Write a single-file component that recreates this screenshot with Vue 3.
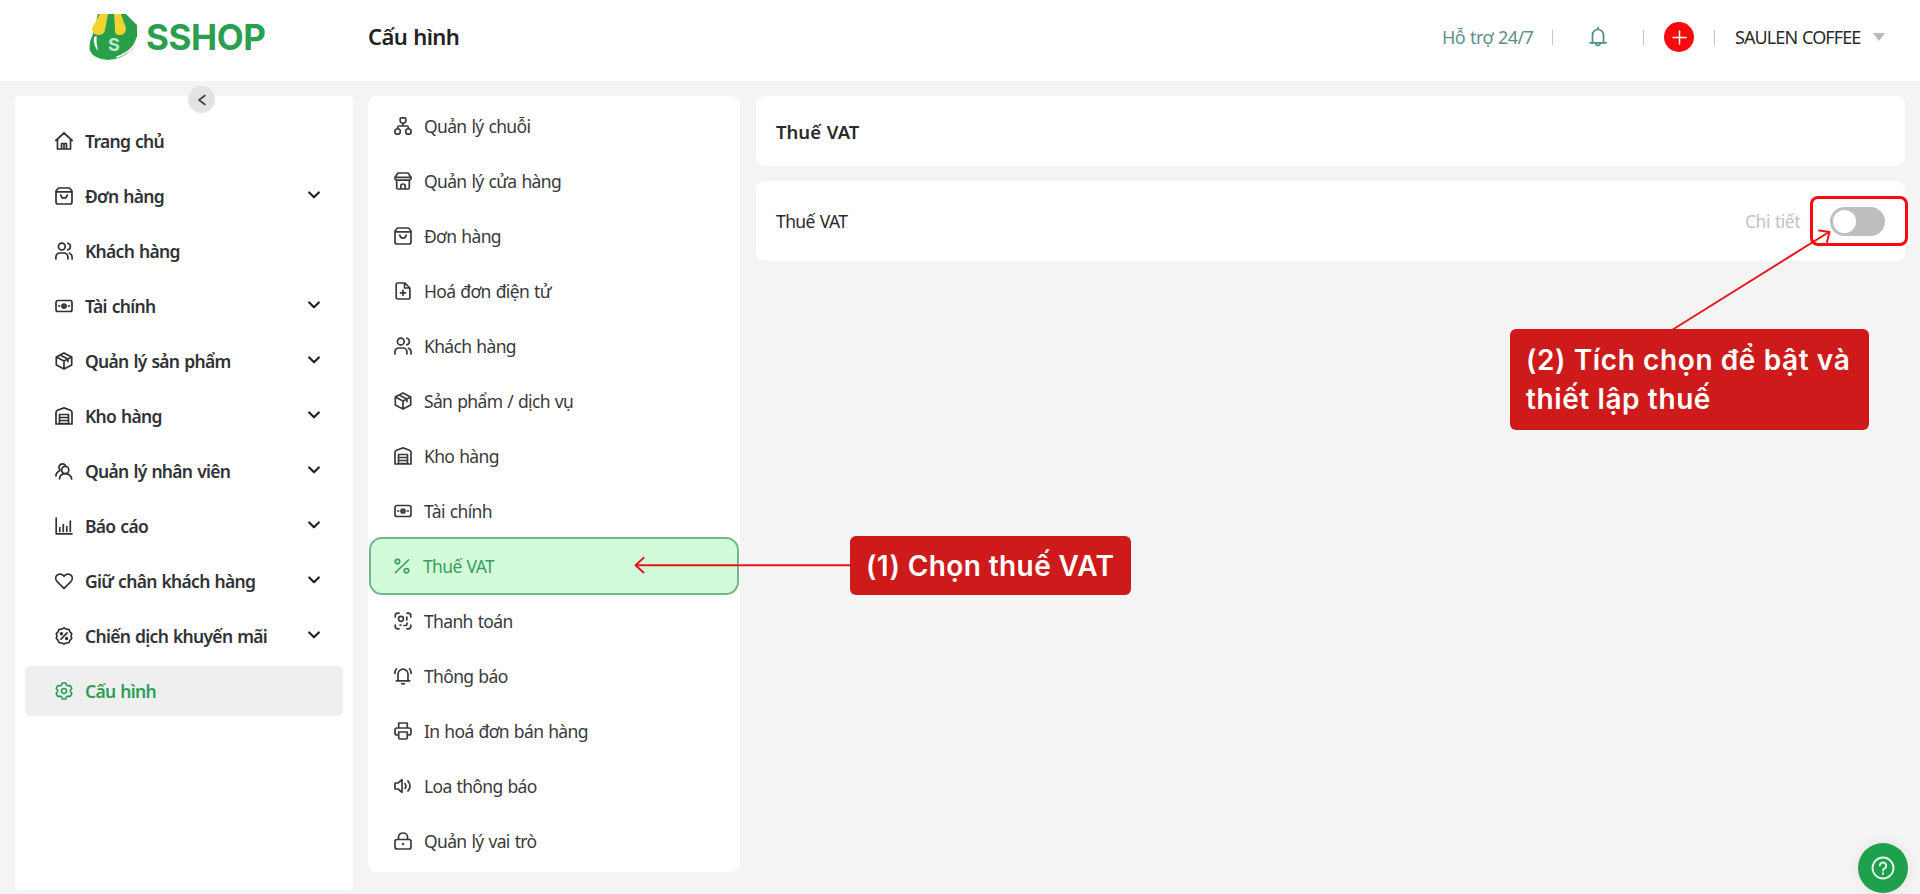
<template>
  <div class="page">
    <header class="topbar">
      <div class="brand">
        <svg class="brand-mark" viewBox="0 0 50 48">
          <path d="M10 1H38L49 12V22Q50 30 43 37Q35 46 20 47Q6 46 2 38Q0 31 5 21Z" fill="#2a9f4a" />
          <path d="M12 1H20L17 17Q16 22 10 22Q4 21 4 15Z" fill="#f3d32f" />
          <path d="M26 1H33L38 15Q38 22 32 22Q26 22 27 16Z" fill="#f3d32f" />
          <path d="M6 24Q5 32 10 38Q8 30 8.500 23Z" fill="#fff" />
          <path d="M49 25Q46 38 29 44" fill="none" stroke="#fff" stroke-width="1.500" />
          <text x="20" y="38" class="brand-s">S</text>
        </svg>
        <span class="brand-name">SSHOP</span>
      </div>
      <h1 class="page-title">Cấu hình</h1>
      <div class="topbar-right">
        <span class="support">Hỗ trợ 24/7</span>
        <span class="sep"></span>
        <svg class="bell" viewBox="0 0 18 20">
          <path d="M3.500 15.500V8a5.500 5.500 0 0 1 11 0v7.500M1 15.800h16M9 2.500V.8M7 17.500q2 2.200 4 0" />
        </svg>
        <span class="sep"></span>
        <button class="add-btn">
          <svg viewBox="0 0 16 16"><path d="M8 1v14M1 8h14" /></svg>
        </button>
        <span class="sep"></span>
        <span class="account">SAULEN COFFEE</span>
        <span class="caret"></span>
      </div>
    </header>

    <div class="content">
      <nav class="sidebar">
        <button class="collapse-btn">
          <svg viewBox="0 0 10 12"><path d="M8 1.500L2 6l6 4.500" /></svg>
        </button>
        <div v-for="item in mainMenu" :key="item.label" class="side-item" :class="{ active: item.active }">
          <svg class="icon" viewBox="0 0 18 18"><path :d="icons[item.icon]" /></svg>
          <span class="side-label">{{ item.label }}</span>
          <svg v-if="item.children" class="chevron" viewBox="0 0 12 8"><path d="M1.200 1.500L6 6.300l4.800-4.800" /></svg>
        </div>
      </nav>

      <nav class="settings">
        <div v-for="item in settingsMenu" :key="item.label" class="set-item" :class="{ active: item.active }">
          <svg class="icon" viewBox="0 0 18 18"><path :d="icons[item.icon]" /></svg>
          <span class="set-label">{{ item.label }}</span>
        </div>
      </nav>

      <main class="main">
        <section class="card card-title">Thuế VAT</section>
        <section class="card card-row">
          <span class="row-name">Thuế VAT</span>
          <span class="row-detail">Chi tiết</span>
          <span class="switch" :class="{ on: vatEnabled }" @click="vatEnabled = !vatEnabled"><i></i></span>
        </section>
      </main>
    </div>

    <!-- guide notes over the page -->
    <svg class="arrows" viewBox="0 0 1920 894">
      <path d="M852 565.200H636M643.500 558L635.500 565.200L643.500 572.400" />
      <path d="M1672 330L1829 232M1819 230.500L1829.500 232L1827 242" />
    </svg>
    <div class="target"></div>
    <div class="note note-one">(1) Chọn thuế VAT</div>
    <div class="note note-two">(2) Tích chọn để bật và<br />thiết lập thuế</div>

    <button class="help-btn">
      <svg viewBox="0 0 24 24">
        <circle cx="12" cy="12" r="10.500" />
        <path d="M8.800 9.600a3.200 3.200 0 1 1 4.800 2.800q-1.600.9-1.600 2.300M12 17.200v.9" />
      </svg>
    </button>
  </div>
</template>

<script setup>
import { ref } from 'vue';

const vatEnabled = ref(false);

const icons = {
  home: 'M.8 8.500L9 1l8.200 7.500M2.500 7.500V17h13V7.500M6.500 17v-5.500h5V17M9 12v4',
  bag: 'M3.500 1h11L17 4v11a2 2 0 0 1-2 2H3a2 2 0 0 1-2-2V4zM1 4.800h16M5.800 8q.4 3.200 3.200 3.200T12.200 8',
  users: 'M10.200 4.500a3.400 3.400 0 1 1-6.800 0a3.400 3.400 0 0 1 6.800 0M.9 17v-2a4 4 0 0 1 4-4h4a4 4 0 0 1 4 4v2M12.800 1.200a3.400 3.400 0 0 1 0 6.600M14.500 11.200q2.600 1 2.600 4V17',
  money: 'M3 3.500h12a2 2 0 0 1 2 2v7a2 2 0 0 1-2 2H3a2 2 0 0 1-2-2v-7a2 2 0 0 1 2-2M11 9a2 2 0 1 1-4 0a2 2 0 0 1 4 0M9 8.500v1M3.700 9h1M13.300 9h1',
  box: 'M9 .9l7.700 4v8.200L9 17.100l-7.700-4V4.900zM1.300 4.900L9 9l7.700-4.100M9 9v8M5 2.900l7.900 4.200v2.500',
  store: 'M1 17V5.500Q1 4 2.500 3.200L9 .9l6.500 2.300Q17 4 17 5.500V17zM4.500 17V7.500h9V17M4.500 10.500h9M4.500 13.500h9M4.500 16.500h9',
  staff: 'M13.800 8a3.600 3.600 0 1 1-7.200 0a3.600 3.600 0 0 1 7.200 0M4.500 17q.2-5 5.700-5.400q5.500.4 6.500 5.400M4.800 7.800a3.400 3.400 0 1 1 5.500-4.600M.9 14q.2-3.600 4-5.400',
  chart: 'M1.200 1v15.800H17M4.800 14.500v-4M8.300 14.500v-7M11.800 14.500v-5M15.300 14.500V4',
  heart: 'M9 16.300L2.200 9.600a4.500 4.500 0 0 1-.4-6.200a4.500 4.500 0 0 1 6.600.2L9 4.300l.6-.7a4.500 4.500 0 0 1 6.600-.2a4.500 4.500 0 0 1-.4 6.200z',
  promo: 'M9 .9l2.300 1.200 2.600.2.900 2.400 1.900 1.900-.6 2.400.6 2.500-1.900 1.900-.9 2.300-2.600.3L9 17.100l-2.300-1.100-2.600-.3-.9-2.300-1.900-1.900.6-2.500-.6-2.400 1.900-1.900.9-2.400 2.600-.2zM12 5.800L6 12.200M7.300 6.700a.9.900 0 1 1-1.800 0a.9.900 0 0 1 1.800 0M12.500 11.500a.9.900 0 1 1-1.800 0a.9.900 0 0 1 1.800 0',
  gear: 'M7.300 1h3.400l.8 2.100 1.300.8 2.300-.4 1.700 2.900L15.400 8.200v1.600l1.400 1.800-1.700 2.900-2.300-.4-1.300.8-.8 2.100H7.300l-.8-2.100-1.300-.8-2.300.4-1.700-2.900L2.600 9.800V8.200L1.200 6.400l1.700-2.900 2.300.4 1.300-.8zM11.500 9a2.500 2.500 0 1 1-5 0a2.500 2.500 0 0 1 5 0',
  chain: 'M7 .9h4a.8.800 0 0 1 .8.800v2.800L10.500 6h-3L6.200 4.500V1.700A.8.800 0 0 1 7 .9M9 6v3M3.700 12V10.500q0-1.500 1.500-1.500h7.600q1.500 0 1.500 1.500V12M2.200 12h3l1 1.200v2.600l-1 1.300h-3l-1.200-1.300v-2.600zM12.800 12h3l1.200 1.200v2.600l-1.200 1.300h-3l-1-1.300v-2.600z',
  shop: 'M4 1h10l3 4.300v1q0 1.900-2 1.900H3q-2 0-2-1.900v-1zM1.200 5.300h15.600M2.700 8.200V15.500q0 1.500 1.500 1.500h9.600q1.500 0 1.500-1.500V8.200M6.800 17v-2.700q0-2.300 2.200-2.300t2.200 2.300V17',
  invoice: 'M3.700 1h7.200l5 5v9.500a1.500 1.500 0 0 1-1.500 1.500H3.700a1.500 1.500 0 0 1-1.500-1.500v-13A1.500 1.500 0 0 1 3.700 1M10.500 1.200V6h5M9 8.300v5M6.500 10.800h5',
  percent: 'M15.500 3L2.500 15.500M6.700 4.500a2.200 2.200 0 1 1-4.400 0a2.200 2.200 0 0 1 4.400 0M15.700 13.700a2.200 2.200 0 1 1-4.400 0a2.200 2.200 0 0 1 4.400 0',
  scan: 'M1.200 5V3.700q0-2.500 2.500-2.500H5M13 1.200h1.300q2.500 0 2.500 2.500V5M1.200 13v1.300q0 2.500 2.500 2.500H5M13 16.800h1.300q2.500 0 2.500-2.500V13M9.500 6.800a2.500 2.500 0 1 1-5 0a2.500 2.500 0 0 1 5 0M12.800 5v3M13 11v1q0 1.500-1.500 1.500H10M6 13h1',
  alarm: 'M4 13.500V7.200a5 5 0 0 1 10 0v6.300M2.300 13.800h13.400M7.700 16.500q1.300 1.200 2.600 0M.9 6.500Q1 3.500 2.500 1.800M17.100 6.500Q17 3.500 15.500 1.800',
  printer: 'M4.700 6V1h8.600v5M4.500 13H3q-2 0-2-2V8q0-2 2-2h12q2 0 2 2v3q0 2-2 2h-1.500M4.700 10h8.600v5.500q0 1.500-1.500 1.500H6.200q-1.500 0-1.500-1.500z',
  speaker: 'M1 6h3l4-3.300v12.600L4 12H1zM11 6.700q1.800 2.300 0 4.600M14 4q4 5 0 10',
  lock: 'M3 7.500h12q2 0 2 2V15q0 2-2 2H3q-2 0-2-2V9.500q0-2 2-2M4.500 7.500V5a4.500 4 0 0 1 9 0v2.500M8.600 12h.8M9 11.600v.8'
};

const mainMenu = [
  { label: 'Trang chủ', icon: 'home' },
  { label: 'Đơn hàng', icon: 'bag', children: true },
  { label: 'Khách hàng', icon: 'users' },
  { label: 'Tài chính', icon: 'money', children: true },
  { label: 'Quản lý sản phẩm', icon: 'box', children: true },
  { label: 'Kho hàng', icon: 'store', children: true },
  { label: 'Quản lý nhân viên', icon: 'staff', children: true },
  { label: 'Báo cáo', icon: 'chart', children: true },
  { label: 'Giữ chân khách hàng', icon: 'heart', children: true },
  { label: 'Chiến dịch khuyến mãi', icon: 'promo', children: true },
  { label: 'Cấu hình', icon: 'gear', active: true }
];

const settingsMenu = [
  { label: 'Quản lý chuỗi', icon: 'chain' },
  { label: 'Quản lý cửa hàng', icon: 'shop' },
  { label: 'Đơn hàng', icon: 'bag' },
  { label: 'Hoá đơn điện tử', icon: 'invoice' },
  { label: 'Khách hàng', icon: 'users' },
  { label: 'Sản phẩm / dịch vụ', icon: 'box' },
  { label: 'Kho hàng', icon: 'store' },
  { label: 'Tài chính', icon: 'money' },
  { label: 'Thuế VAT', icon: 'percent', active: true },
  { label: 'Thanh toán', icon: 'scan' },
  { label: 'Thông báo', icon: 'alarm' },
  { label: 'In hoá đơn bán hàng', icon: 'printer' },
  { label: 'Loa thông báo', icon: 'speaker' },
  { label: 'Quản lý vai trò', icon: 'lock' }
];
</script>

<style>
body {
  margin: 0;
  background: #f4f4f4;
}
</style>

<style scoped>
.page {
  position: relative;
  width: 1920px;
  height: 894px;
  overflow: hidden;
  background: #f4f4f4;
  font-family: "Noto Sans", "Open Sans", sans-serif;
  font-size: 17.5px;
  letter-spacing: -0.7px;
  word-spacing: 1px;
  color: #2b2b2b;
  box-sizing: border-box;
}

.page * {
  box-sizing: border-box;
}

button {
  border: 0;
  padding: 0;
  display: flex;
  align-items: center;
  justify-content: center;
  border-radius: 50%;
}

svg {
  flex: none;
}

path,
circle {
  stroke-linecap: round;
  stroke-linejoin: round;
}

.topbar {
  height: 81px;
  background: #fff;
  display: flex;
  align-items: center;
  padding: 0 35px 7px 88px;
}

.brand {
  display: flex;
  align-items: center;
  width: 280px;
  gap: 8px;
}

.brand-mark {
  width: 50px;
  height: 48px;
}

.brand-s {
  font: 700 18px Inter, sans-serif;
  fill: #bfe8cd;
}

.brand-name {
  font-family: Inter, sans-serif;
  font-size: 35px;
  font-weight: 700;
  letter-spacing: -0.4px;
  line-height: 46px;
  color: #2a9f4f;
}

.page-title {
  margin: 0;
  padding-bottom: 2px;
  font-size: 22px;
  font-weight: 600;
  letter-spacing: -0.6px;
  color: #222;
}

.topbar-right {
  margin-left: auto;
  display: flex;
  align-items: center;
}

.support {
  width: 110px;
  font-size: 18px;
  letter-spacing: -0.6px;
  color: #5b918b;
}

.sep {
  width: 1px;
  height: 15px;
  background: #c4c4c4;
}

.bell {
  width: 18px;
  height: 20px;
  margin: 0 36px;
}

.bell path {
  fill: none;
  stroke: #4d8d87;
  stroke-width: 1.7;
}

.add-btn {
  width: 30px;
  height: 30px;
  margin: 0 20px;
  background: #f9090d;
}

.add-btn svg {
  width: 15px;
  height: 15px;
}

.add-btn path {
  stroke: #fff;
  stroke-width: 1.6;
}

.account {
  margin-left: 20px;
  width: 138px;
  font-size: 18px;
  letter-spacing: -0.9px;
  white-space: nowrap;
}

.caret {
  border: 6px solid transparent;
  border-top: 8px solid #b9bcbc;
  border-bottom: 0;
}

.content {
  display: flex;
  align-items: flex-start;
  padding: 15px 15px 0 15px;
}

.sidebar {
  position: relative;
  width: 338px;
  height: 794px;
  margin-right: 15px;
  padding: 20px 10px 0;
  background: #fff;
  border-radius: 4px;
  display: flex;
  flex-direction: column;
  gap: 5px;
}

.collapse-btn {
  position: absolute;
  left: 173px;
  top: -10px;
  width: 27px;
  height: 27px;
  background: #e2e3e2;
}

.collapse-btn svg {
  width: 10px;
  height: 12px;
}

.collapse-btn path {
  fill: none;
  stroke: #3d4349;
  stroke-width: 1.6;
}

.side-item {
  height: 50px;
  padding: 0 23px 0 30px;
  display: flex;
  align-items: center;
  border-radius: 5px;
  font-weight: 560;
  color: #303236;
}

.side-item.active {
  background: #eeefee;
  color: #2a9f55;
}

.icon {
  width: 18px;
  height: 18px;
  margin-right: 12px;
}

.icon path {
  fill: none;
  stroke: currentColor;
  stroke-width: 1.7;
}

.side-label {
  flex: 1;
  white-space: nowrap;
}

.chevron {
  width: 12px;
  height: 8px;
  margin-top: -2px;
}

.chevron path {
  fill: none;
  stroke: #222;
  stroke-width: 2.2;
}

.settings {
  width: 372px;
  height: 776px;
  margin-right: 16px;
  padding: 2px 1px 0;
  background: #fff;
  border-radius: 9px;
}

.set-item {
  height: 55px;
  padding-left: 25px;
  display: flex;
  align-items: center;
  color: #3a3a3a;
}

.set-label {
  letter-spacing: -0.65px;
}

.set-item.active {
  height: 58px;
  margin: -1px 0 -2px;
  padding-left: 22px;
  border: 2px solid #73b78e;
  border-radius: 13px;
  background: #d2fbd9;
  color: #3a9d5c;
}

.main {
  flex: 1;
  display: flex;
  flex-direction: column;
  gap: 15px;
}

.card {
  background: #fff;
  border-radius: 9px;
  padding: 0 20px;
  display: flex;
  align-items: center;
}

.card-title {
  height: 70px;
  padding-top: 1px;
  font-size: 18.5px;
  font-weight: 600;
  letter-spacing: 0;
}

.card-row {
  height: 80px;
}

.row-name {
  letter-spacing: -0.6px;
}

.row-detail {
  margin-left: auto;
  margin-right: 30px;
  letter-spacing: -0.5px;
  color: #c3c3c3;
}

.switch {
  width: 55px;
  height: 29px;
  padding: 3px;
  border-radius: 15px;
  background: #bcbfbc;
}

.switch i {
  display: block;
  width: 23px;
  height: 23px;
  border-radius: 50%;
  background: #fff;
}

.switch.on {
  padding-left: 29px;
  background: #2a9f55;
}

.arrows {
  position: absolute;
  left: 0;
  top: 0;
  width: 1920px;
  height: 894px;
  pointer-events: none;
}

.arrows path {
  fill: none;
  stroke: #e8141a;
  stroke-width: 2;
}

.target {
  position: absolute;
  left: 1810px;
  top: 196px;
  width: 98px;
  height: 50px;
  border: 3px solid #f40c10;
  border-radius: 8px;
  pointer-events: none;
}

.note {
  position: absolute;
  background: #ce1a1a;
  border-radius: 6px;
  color: #fff;
  font-family: Inter, sans-serif;
  font-size: 28px;
  font-weight: 600;
  line-height: 39px;
  letter-spacing: 0.5px;
  word-spacing: 0;
  white-space: nowrap;
}

.note-one {
  left: 850px;
  top: 536px;
  width: 281px;
  height: 59px;
  padding: 11px 16px;
  letter-spacing: 0.4px;
}

.note-two {
  left: 1510px;
  top: 329px;
  width: 359px;
  height: 101px;
  padding: 12px 16px;
  letter-spacing: 0.6px;
}

.help-btn {
  position: absolute;
  left: 1858px;
  top: 843px;
  width: 50px;
  height: 50px;
  background: #1fa04c;
  box-shadow: 0 0 14px rgba(0, 0, 0, 0.08);
}

.help-btn svg {
  width: 24px;
  height: 24px;
}

.help-btn circle,
.help-btn path {
  fill: none;
  stroke: #e9fbef;
  stroke-width: 1.8;
}
</style>
